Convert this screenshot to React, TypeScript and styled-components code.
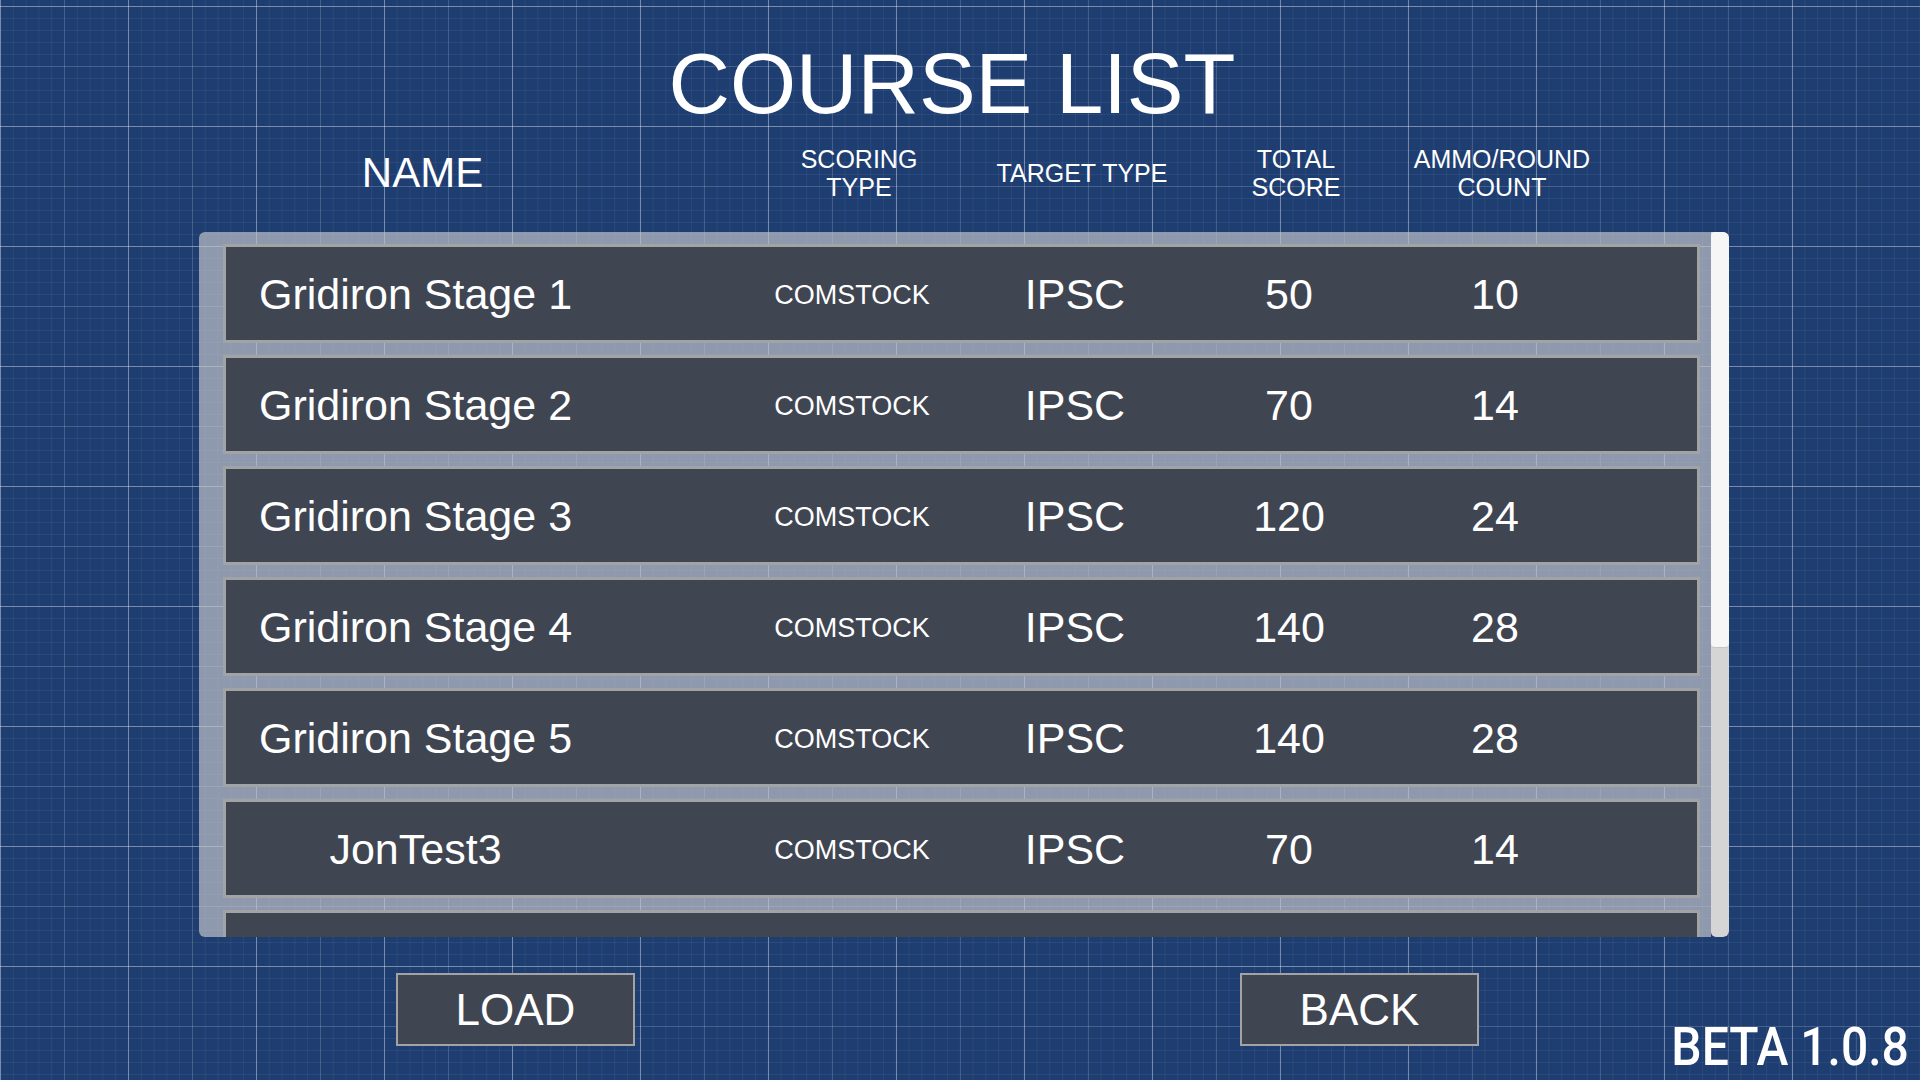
import React from 'react';
import styled, { createGlobalStyle } from 'styled-components';

const GlobalStyle = createGlobalStyle`
  html, body {
    margin: 0;
    padding: 0;
  }
  body {
    font-family: "Liberation Sans", Arial, sans-serif;
    background: #1e3d71;
    overflow: hidden;
  }
  * {
    box-sizing: border-box;
  }
`;

// name column holds a 379px centered cell, then the four data columns
const COLUMNS = '517px 218px 228px 200px 212px';

const Screen = styled.div`
  position: relative;
  width: 1920px;
  height: 1080px;
  overflow: hidden;
  padding: 0 191px 0 199px;
  display: flex;
  flex-direction: column;
  color: #ffffff;
  background-color: #1e3d71;
  background-image:
    linear-gradient(to right, rgba(255, 255, 255, 0.27) 1px, transparent 1px),
    linear-gradient(to bottom, rgba(255, 255, 255, 0.27) 1px, transparent 1px),
    linear-gradient(to right, rgba(255, 255, 255, 0.13) 1px, transparent 1px),
    linear-gradient(to bottom, rgba(255, 255, 255, 0.13) 1px, transparent 1px),
    linear-gradient(to right, rgba(255, 255, 255, 0.055) 1px, transparent 1px),
    linear-gradient(to bottom, rgba(255, 255, 255, 0.055) 1px, transparent 1px);
  background-size: 128px 100%, 100% 120px, 64px 100%, 100% 60px, 12.8px 100%, 100% 12px;
  background-position: 0 0, 0 6px, 0 0, 0 6px, 0 0, 0 6px;
`;

const Title = styled.h1`
  margin: 41px 0 0;
  padding-right: 24px;
  font-size: 85px;
  line-height: 86px;
  font-weight: 400;
  text-align: center;
`;

const HeaderRow = styled.div`
  display: grid;
  grid-template-columns: ${COLUMNS};
  align-items: center;
  height: 56px;
  margin: 18px 0 0 34px;
`;

const HeaderLabel = styled.div<{ $big?: boolean }>`
  width: ${p => (p.$big ? '379px' : 'auto')};
  text-align: center;
  font-size: ${p => (p.$big ? '42px' : '25px')};
  line-height: ${p => (p.$big ? '48px' : '28px')};
  text-transform: uppercase;
`;

const Panel = styled.div`
  display: flex;
  height: 705px;
  margin-top: 31px;
  border-radius: 6px;
  overflow: hidden;
`;

const List = styled.div`
  flex: 1;
  display: flex;
  flex-direction: column;
  gap: 12px;
  padding: 12px 11px 0 24px;
  background: rgba(196, 197, 204, 0.68);
  overflow: hidden;
`;

const Row = styled.div`
  flex: none;
  height: 99px;
  display: grid;
  grid-template-columns: ${COLUMNS};
  align-items: center;
  background: #404552;
  border: 3px solid #a2a3a5;
`;

const NameCell = styled.div`
  width: 379px;
  padding-top: 2px;
  text-align: center;
  font-size: 43px;
  white-space: nowrap;
`;

const Cell = styled.div<{ $small?: boolean }>`
  padding-top: ${p => (p.$small ? '4px' : '2px')};
  text-align: center;
  font-size: ${p => (p.$small ? '27px' : '43px')};
  white-space: nowrap;
`;

const ScrollTrack = styled.div`
  width: 18px;
  flex: none;
  background: #d5d5d5;
  border-radius: 0 5px 5px 5px;
`;

const ScrollThumb = styled.div`
  height: 416px;
  background: #f6f6f6;
  border-radius: 4px;
  border-bottom: 1px solid #c4c4c4;
`;

const ButtonRow = styled.div`
  display: flex;
  gap: 605px;
  margin-top: 36px;
  padding-left: 197px;
`;

const Button = styled.button`
  width: 239px;
  height: 73px;
  padding: 0;
  display: flex;
  align-items: center;
  justify-content: center;
  background: #404552;
  border: 2px solid #a3a3a5;
  color: #ffffff;
  font-family: "Liberation Sans", Arial, sans-serif;
  font-size: 44px;
  cursor: pointer;
`;

const Version = styled.div`
  position: absolute;
  right: 11px;
  bottom: 9px;
  font-family: Roboto, "Liberation Sans", sans-serif;
  font-weight: 500;
  font-size: 54px;
  line-height: 48px;
  transform: scaleX(0.89);
  transform-origin: right center;
  white-space: nowrap;
`;

interface Course {
  name: string;
  scoring: string;
  target: string;
  total: number;
  ammo: number;
}

const courses: Course[] = [
  { name: 'Gridiron Stage 1', scoring: 'COMSTOCK', target: 'IPSC', total: 50, ammo: 10 },
  { name: 'Gridiron Stage 2', scoring: 'COMSTOCK', target: 'IPSC', total: 70, ammo: 14 },
  { name: 'Gridiron Stage 3', scoring: 'COMSTOCK', target: 'IPSC', total: 120, ammo: 24 },
  { name: 'Gridiron Stage 4', scoring: 'COMSTOCK', target: 'IPSC', total: 140, ammo: 28 },
  { name: 'Gridiron Stage 5', scoring: 'COMSTOCK', target: 'IPSC', total: 140, ammo: 28 },
  { name: 'JonTest3', scoring: 'COMSTOCK', target: 'IPSC', total: 70, ammo: 14 },
];

const App: React.FC = () => {
  return (
    <>
      <GlobalStyle />
      <Screen>
        <Title>COURSE LIST</Title>

        <HeaderRow>
          <HeaderLabel $big>Name</HeaderLabel>
          <HeaderLabel>Scoring<br />Type</HeaderLabel>
          <HeaderLabel>Target Type</HeaderLabel>
          <HeaderLabel>Total<br />Score</HeaderLabel>
          <HeaderLabel>Ammo/Round<br />Count</HeaderLabel>
        </HeaderRow>

        <Panel>
          <List>
            {courses.map(c => (
              <Row key={c.name}>
                <NameCell>{c.name}</NameCell>
                <Cell $small>{c.scoring}</Cell>
                <Cell>{c.target}</Cell>
                <Cell>{c.total}</Cell>
                <Cell>{c.ammo}</Cell>
              </Row>
            ))}
            {/* next entry, scrolled below the visible area */}
            <Row />
          </List>
          <ScrollTrack>
            <ScrollThumb />
          </ScrollTrack>
        </Panel>

        <ButtonRow>
          <Button>LOAD</Button>
          <Button>BACK</Button>
        </ButtonRow>

        <Version>BETA 1.0.8</Version>
      </Screen>
    </>
  );
};

export default App;
